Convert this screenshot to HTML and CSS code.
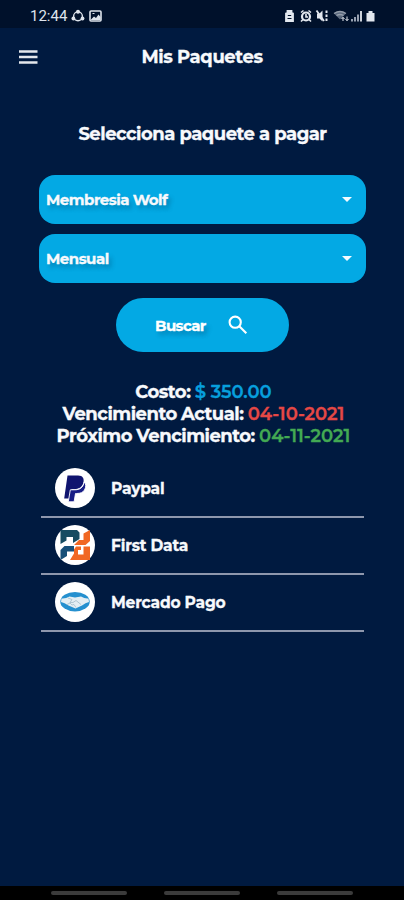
FILE: index.html
```
<!DOCTYPE html>
<html lang="es">
<head>
<meta charset="utf-8">
<title>Mis Paquetes</title>
<link rel="stylesheet" href="styles.css">
</head>
<body>
<div class="status">
  <span class="time">12:44</span>
  <svg class="left-icons" width="32" height="14" viewBox="0 0 32 14" fill="none" stroke="#dde3eb">
    <circle cx="7" cy="7.3" r="4.4" stroke-width="1.4"/>
    <g fill="#dde3eb" stroke="none"><circle cx="7" cy="2.8" r="2"/><circle cx="2.4" cy="9.5" r="1.9"/><circle cx="11.5" cy="9.5" r="1.9"/></g>
    <rect x="19" y="2" width="11" height="10" rx="1" stroke-width="1.6"/>
    <path d="M20 10.5l3-3 2 1.500 2.500-3.500 2 2.500v3H20z" fill="#dde3eb" stroke="none"/><path d="M21.500 4.500h2"/>
  </svg>
  <svg class="right-icons" width="94" height="14" viewBox="0 0 94 14" fill="none" stroke="#e3e8ef">
    <path d="M3.500 3.500V2h4v1.500l1.500 1V12H2V4.500z" fill="#e3e8ef" stroke-width="1.800"/><path d="M3.500 9.500h4M3.800 6.500h3.400" stroke="#001129"/>
    <circle cx="22" cy="7.500" r="4" stroke-width="2.200"/><path d="M22 5v3h2M17 3.500l2.500-2M27 3.500l-2.500-2M19 10.500l-2 2M25 10.500l2 2" stroke-width="1.600"/>
    <path d="M33 4.500h2.500l3-3v11l-3-3H33z" fill="#e3e8ef" stroke="none"/><path d="M32.500 1.500l7.500 10.500" stroke-width="1.800"/><path d="M42.500 1.500v11" stroke-width="2" stroke-dasharray="2.500 1.500"/>
    <g opacity=".65"><path d="M50 4.500q6-4 12 0l-6 6z" fill="#8b98aa" stroke="none"/><path d="M50 4.500q6-4 12 0M52.500 6.500q3.500-2 7 0" stroke-width="1.300"/></g>
    <path d="M59 12V8.500M57.500 10l1.500-1.700 1.500 1.700M63 7.500v4M61.500 10l1.500 1.700 1.500-1.700"/>
    <path d="M68 12.500V10M71 12.500V8M74 12.500V5.500" stroke="#a7b1bf" stroke-width="1.800"/><path d="M77 12.500V2" stroke-width="1.800"/>
    <path d="M82.500 4h2V2h4v2h2v8.500h-8z" fill="#e3e8ef" stroke="none"/>
  </svg>
</div>
<header class="bar">
  <svg class="menu" width="20" height="14" viewBox="0 0 20 14"><path d="M0 1.600h18.500M0 7h18.500M0 12.400h18.500" stroke="#e4e7ec" stroke-width="2.500"/></svg>
  <h1>Mis Paquetes</h1>
</header>
<main>
  <h2>Selecciona paquete a pagar</h2>
  <div class="select"><span>Membresia Wolf</span><i class="caret"></i></div>
  <div class="select"><span>Mensual</span><i class="caret"></i></div>
  <button class="search"><span>Buscar</span>
    <svg width="20" height="20" viewBox="0 0 20 20" fill="none" stroke="#fff" stroke-width="2.100"><circle cx="7.200" cy="7.200" r="5.600"/><path d="M11.300 11.300l7 7"/></svg>
  </button>
  <div class="summary">
    <p>Costo: <b class="blue">$ 350.00</b></p>
    <p>Vencimiento Actual: <b class="red">04-10-2021</b></p>
    <p>Próximo Vencimiento: <b class="green">04-11-2021</b></p>
  </div>
  <ul class="methods">
    <li>
      <svg width="40" height="40" viewBox="0 0 40 40"><circle cx="20" cy="20" r="20" fill="#fff"/><path d="M12.500 7.500H23c5 0 6.500 3.500 5.300 7.500C27 19.500 23.500 21 19.500 21h-3L15 30.500H9.200z" fill="#10146f"/><path d="M29.200 14c2 2 2 5 .3 8-1.500 2.500-4 3.500-8 3.500h-1l-1.400 8.300h-5.800l2-12h4.500c5 0 8.300-2 9.400-7.800z" fill="#181d86" stroke="#fff" stroke-width=".9"/></svg>
      <span>Paypal</span>
    </li>
    <li>
      <svg width="40" height="40" viewBox="0 0 40 40"><circle cx="20" cy="20" r="20" fill="#fff"/><path d="M5.500 5H22l2.500 2.500V14L18 18v-6h-6.500v3.500L5.500 19z" fill="#164c61"/><path d="M28.500 8.500L35 5v11l-4.500 4H19l5-5h4.500z" fill="#f16722"/><path d="M5.500 25l4-4H19v5.500h-7V31l-6.500 4z" fill="#164f78"/><path d="M28.500 21.500H35V35H15l4-6.500v-4l2-3h5v3.500h-3v4.500h5.500z" fill="#f16722"/></svg>
      <span>First Data</span>
    </li>
    <li>
      <svg width="40" height="40" viewBox="0 0 40 40"><circle cx="20" cy="20" r="20" fill="#fff"/><ellipse cx="20" cy="19.700" rx="14.700" ry="9.700" fill="#2590cf"/><path d="M6.500 16.500q4 .5 8-2l5.500 1 6-1q4 2.500 7.500 2l.5 3.500q-3.500.5-7 3.500l-6.500 3-7-3q-4-3-7.500-3.500z" fill="#e4eef3"/><path d="M13 16l4 1.500-2 3q3 1 6-2l5 4M12 22.500l3-1.500 2 2 2-.5 2 3" fill="none" stroke="#9bb6c4" stroke-width=".7"/></svg>
      <span>Mercado Pago</span>
    </li>
  </ul>
</main>
<nav class="system"><i></i><i></i><i></i></nav>
</body>
</html>
```
FILE: styles.css
```
* { box-sizing: border-box; }
body {
  margin: 0; width: 404px; height: 900px; overflow: hidden;
  display: flex; flex-direction: column;
  background: #001a40; color: #f7f9fc;
  font-family: Montserrat, Inter, "Open Sans", sans-serif; font-weight: 700;
  -webkit-text-stroke: .3px currentColor;
}
h1, h2, p, ul { margin: 0; padding: 0; }
.status { height: 28px; background: #00112b; display: flex; align-items: center; padding: 3px 26px 0 30px; }
.time { font: 400 15px/16px Roboto, sans-serif; color: #dfe4ec; width: 41px; -webkit-text-stroke: 0; }
.right-icons { margin-left: auto; }
.bar { height: 57px; display: grid; grid-template-columns: 60px 1fr 60px; align-items: center; text-align: center; }
.menu { margin-left: 19px; }
h1 { font-size: 18px; line-height: 24px; letter-spacing: -.4px; }
main { flex: 1; }
h2 { height: 90px; padding: 37px 0 0 1px; text-align: center; font-size: 18px; line-height: 24px; letter-spacing: -.5px; }
.select {
  width: 327px; height: 49px; margin: 0 0 10px 39px; padding: 0 14px 0 7px;
  display: flex; align-items: center; justify-content: space-between;
  border-radius: 16px; background: #03a9e4; font-size: 15px; letter-spacing: -.5px;
  text-shadow: 3px 4px 4px rgba(0, 50, 85, .3);
}
.caret { width: 10px; height: 5px; background: #f5fbff; clip-path: polygon(0 0, 100% 0, 50% 100%); }
.search {
  width: 173px; height: 54px; margin: 15px 0 0 116px; padding: 0 41px 0 39px;
  display: flex; align-items: center; justify-content: space-between;
  border: 0; border-radius: 27px; background: #03a9e4; color: #fff;
  font: inherit; font-size: 15px; letter-spacing: -.6px; text-shadow: 3px 4px 4px rgba(0, 50, 85, .3);
}
.search span { padding-top: 1px; }
.search svg { margin-bottom: 1px; }
.summary { padding: 29px 0 0 3px; text-align: center; font-size: 18px; line-height: 22px; white-space: nowrap; letter-spacing: -.5px; word-spacing: -.3px; }
.summary b { font-weight: 600; letter-spacing: 0; }
.blue { color: #079fdd; }
.red { color: #e54845; }
.green { color: #43a953; }
.methods { width: 323px; margin: 13.500px 0 0 41px; list-style: none; font-size: 15.500px; letter-spacing: -.2px; }
.methods li { height: 57.300px; padding: 0 0 1px 14px; display: flex; align-items: center; gap: 16px; border-bottom: 2px solid #8e97ad; }
.methods span { padding-top: 1px; }
.system { height: 14px; background: #000; display: flex; gap: 37px; padding: 5px 0 0 51px; }
.system i { width: 76px; height: 4px; border-radius: 2px; background: #3b3b3b; }
```
